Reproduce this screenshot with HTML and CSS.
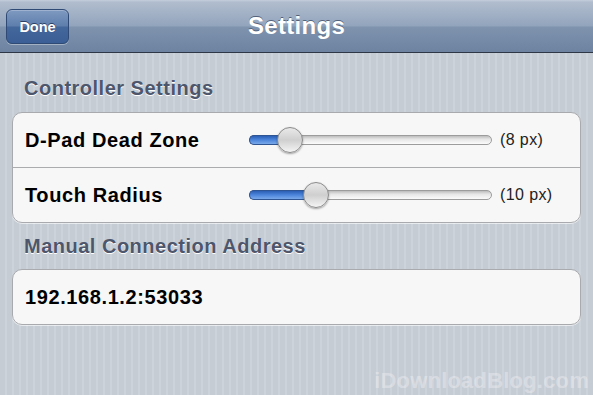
FILE: index.html
```html
<!DOCTYPE html>
<html>
<head>
<meta charset="utf-8">
<link rel="stylesheet" href="styles.css">
</head>
<body>
<div class="screen">
  <header class="navbar">
    <button class="done">Done</button>
    <h1 class="title">Settings</h1>
  </header>
  <main class="content">
    <h2 class="section-header">Controller Settings</h2>
    <div class="group">
      <div class="row">
        <span class="label">D-Pad Dead Zone</span>
        <div class="slider">
          <div class="track"></div>
          <div class="fill" style="width: 43px"></div>
          <div class="thumb" style="left: 28px"></div>
        </div>
        <span class="value">(8 px)</span>
      </div>
      <div class="row">
        <span class="label">Touch Radius</span>
        <div class="slider">
          <div class="track"></div>
          <div class="fill" style="width: 69px"></div>
          <div class="thumb" style="left: 54px"></div>
        </div>
        <span class="value">(10 px)</span>
      </div>
    </div>
    <h2 class="section-header second">Manual Connection Address</h2>
    <div class="group">
      <div class="row">
        <span class="label">192.168.1.2:53033</span>
      </div>
    </div>
  </main>
  <div class="watermark">iDownloadBlog.com</div>
</div>
</body>
</html>
```

FILE: styles.css
```css
* { box-sizing: border-box; margin: 0; padding: 0; }
html, body { width: 593px; height: 395px; overflow: hidden; }
body {
  font-family: "Liberation Sans", Arial, sans-serif;
}
.screen {
  position: relative;
  width: 593px;
  height: 395px;
  background: repeating-linear-gradient(90deg, #c5ccd4 0px, #c5ccd4 5px, #cdd3da 5px, #cdd3da 7px);
}
.navbar {
  position: relative;
  height: 53px;
  display: flex;
  align-items: center;
  justify-content: center;
  background: linear-gradient(180deg, #c4cedb 0px, #b1bdce 2px, #92a4bc 26px, #7f93ae 27px, #6d83a1 52px);
  border-bottom: 1px solid #2d3746;
}
.done {
  position: absolute;
  left: 6px;
  top: 9px;
  width: 63px;
  height: 35px;
  border-radius: 6px;
  border: 1px solid #2f4a74;
  background: linear-gradient(180deg, #7f9ac1 0px, #5e7eac 16px, #44679b 17px, #3a5f96 34px);
  box-shadow: 0 1px 0 rgba(255,255,255,0.35), inset 0 1px 0 rgba(255,255,255,0.25);
  color: #fff;
  font-family: "Liberation Sans", Arial, sans-serif;
  font-weight: bold;
  font-size: 14.5px;
  text-shadow: 0 -1px 0 #2b4166;
}
.title {
  color: #fff;
  font-size: 24px;
  font-weight: bold;
  letter-spacing: 0.3px;
  text-shadow: 0 -1px 0 #52627b;
  margin-top: 0;
}
.content {
  padding: 0 12px;
}
.section-header {
  font-size: 20px;
  font-weight: bold;
  letter-spacing: 0.5px;
  color: #4d566b;
  text-shadow: 0 1px 0 #fff;
  line-height: 22px;
  padding-left: 12px;
  margin-top: 24px;
  margin-bottom: 13px;
}
.section-header.second {
  margin-top: 12px;
  margin-bottom: 12px;
}
.group {
  background: #f7f7f7;
  border: 1px solid #a8aaae;
  border-radius: 10px;
  box-shadow: 0 1px 0 rgba(255,255,255,0.6);
  overflow: hidden;
}
.row {
  height: 54px;
  display: flex;
  align-items: center;
  padding-left: 12px;
}
.row + .row {
  border-top: 1px solid #abacae;
  height: 55px;
}
.label {
  font-size: 20px;
  font-weight: bold;
  letter-spacing: 0.6px;
  color: #000;
  width: 224px;
  flex-shrink: 0;
}
.slider {
  position: relative;
  width: 243px;
  height: 26px;
  flex-shrink: 0;
}
.track {
  position: absolute;
  left: 0;
  right: 0;
  top: 8px;
  height: 10px;
  border-radius: 5px;
  border: 1px solid #9c9c9c;
  background: linear-gradient(180deg, #bdbdbd 0%, #e6e6e6 40%, #fbfbfb 100%);
}
.fill {
  position: absolute;
  left: 0;
  top: 8px;
  height: 10px;
  border-radius: 5px 0 0 5px;
  border: 1px solid #2f5592;
  border-right: none;
  background: linear-gradient(180deg, #2b5fb5 0%, #4c86dc 50%, #7aa9ea 100%);
}
.thumb {
  position: absolute;
  top: 0;
  width: 26px;
  height: 26px;
  border-radius: 50%;
  border: 1px solid #8a8a8a;
  background: linear-gradient(180deg, #e9e9e9 0%, #cfcfcf 50%, #f4f4f4 100%);
  box-shadow: 0 1px 2px rgba(0,0,0,0.35);
}
.value {
  margin-left: 8px;
  font-size: 16px;
  letter-spacing: 0.4px;
  color: #222;
}
.watermark {
  position: absolute;
  right: 4px;
  bottom: 1px;
  font-size: 22px;
  font-weight: bold;
  color: rgba(255,255,255,0.32);
  letter-spacing: 0.2px;
}
```
